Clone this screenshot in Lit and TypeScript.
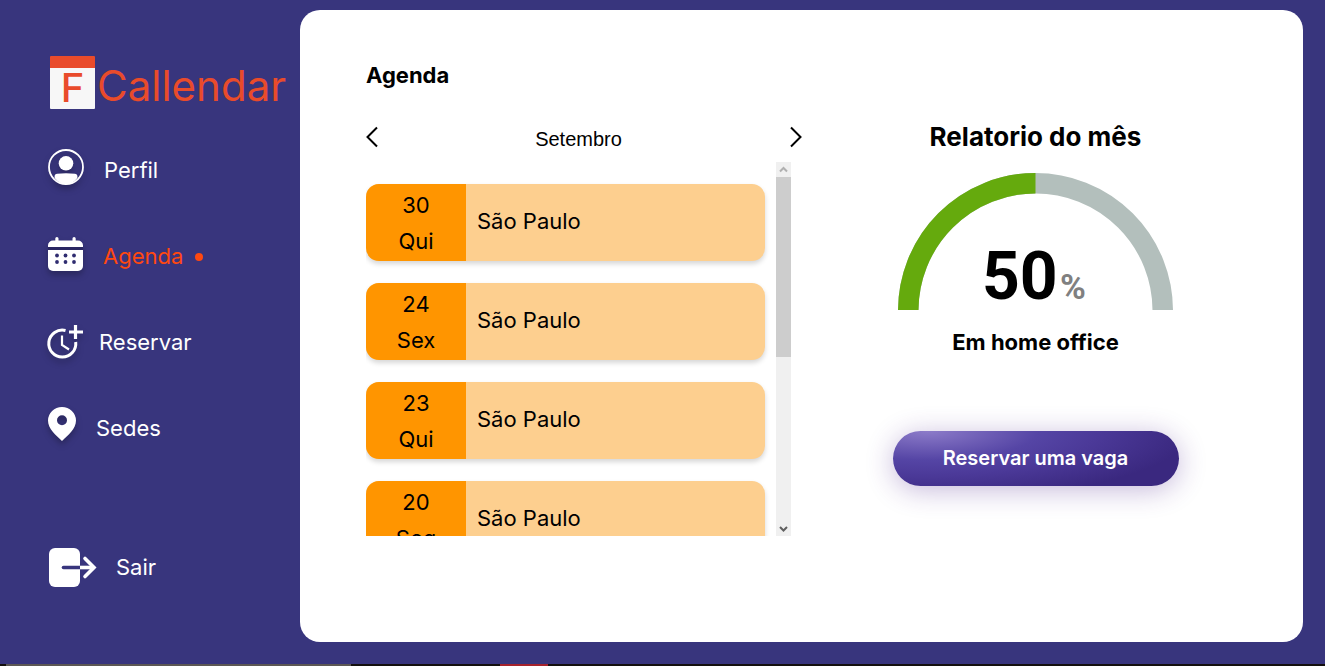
import { LitElement, html, css, svg } from "lit";
import { customElement, state, query } from "lit/decorators.js";
import { classMap } from "lit/directives/class-map.js";

const ICONS: Record<string, unknown> = {
  perfil: html`<svg class="icon shadow" width="36" height="38" viewBox="0 0 36 38" aria-hidden="true">
    <circle cx="18" cy="18" r="17" fill="none" stroke="#fff" stroke-width="1.8" />
    <circle cx="18" cy="14.3" r="7.3" fill="#fff" />
    <path d="M6.6 27.2c0-1.6 1-2.2 2.6-2.4 5.6-.7 12-.7 17.6 0 1.6.2 2.6.8 2.6 2.4v1.800A17 17 0 0 1 18 35.500 17 17 0 0 1 6.600 29z" fill="#fff" />
  </svg>`,
  agenda: html`<svg class="icon shadow" width="35" height="34" viewBox="0 0 35 34" aria-hidden="true">
    <path d="M0 10V8.500A5 5 0 0 1 5 3.500H7.300V1.500a1.600 1.600 0 0 1 3.200 0v2h14V1.500a1.600 1.600 0 0 1 3.200 0v2H30a5 5 0 0 1 5 5V10z" fill="#fff" />
    <path d="M0 10h35v3H0z" fill="#2a2763" />
    <path d="M0 13h35v16a5 5 0 0 1-5 5H5a5 5 0 0 1-5-5z" fill="#fff" />
    <g fill="#2f2c70">
      <circle cx="9" cy="18.500" r="1.900" /><circle cx="17.500" cy="18.500" r="1.900" /><circle cx="26" cy="18.500" r="1.900" />
      <circle cx="9" cy="25" r="1.900" /><circle cx="17.500" cy="25" r="1.900" /><circle cx="26" cy="25" r="1.900" />
    </g>
  </svg>`,
  reservar: html`<svg class="icon shadow" width="31" height="38" viewBox="1 -4 31 38" aria-hidden="true">
    <g fill="none" stroke="#fff">
      <path d="M18.500 5.500A13.500 13.500 0 1 0 28.700 17" stroke-width="3" />
      <path d="M15 10.500v9.500l7 4.500" stroke-width="2.200" />
      <path d="M28.500 0v14M22 7h14" stroke-width="3.200" />
    </g>
  </svg>`,
  sedes: html`<svg class="icon shadow" width="28" height="38" viewBox="0 0 28 38" aria-hidden="true">
    <path fill-rule="evenodd" d="M14 0A14 13.600 0 0 1 28 13.600C28 22 20 28.500 14 34 8 28.500 0 22 0 13.600A14 13.600 0 0 1 14 0zm0 8.300a5 5 0 1 0 0 10 5 5 0 0 0 0-10z" fill="#fff" />
  </svg>`,
  sair: html`<svg class="icon" width="48" height="39" viewBox="-1 0 48 39" aria-hidden="true">
    <rect width="31" height="39" rx="6" fill="#fff" />
    <path d="M14.500 19.500H31" stroke="#38357d" stroke-width="3.600" stroke-linecap="round" />
    <path d="M31 19.500h14" stroke="#fff" stroke-width="3.600" />
    <path d="M36 10.500l9 9-9 9" fill="none" stroke="#fff" stroke-width="3.600" stroke-linecap="round" />
  </svg>`,
};

const LINKS = [
  { id: "perfil", label: "Perfil" },
  { id: "agenda", label: "Agenda" },
  { id: "reservar", label: "Reservar" },
  { id: "sedes", label: "Sedes" },
];

const BOOKINGS = [
  { day: 30, week: "Qui", place: "São Paulo" },
  { day: 24, week: "Sex", place: "São Paulo" },
  { day: 23, week: "Qui", place: "São Paulo" },
  { day: 20, week: "Seg", place: "São Paulo" },
  { day: 16, week: "Qui", place: "São Paulo" },
  { day: 10, week: "Sex", place: "São Paulo" },
  { day: 9, week: "Qui", place: "São Paulo" },
];

const MONTHS = ["Janeiro", "Fevereiro", "Março", "Abril", "Maio", "Junho", "Julho", "Agosto", "Setembro", "Outubro", "Novembro", "Dezembro"];

@customElement("side-menu")
class SideMenu extends LitElement {
  static styles = css`
    :host { display: flex; flex-direction: column; padding: 56px 0 0 48px; box-sizing: border-box; }
    .logo { display: flex; align-items: center; gap: 2px; height: 53px; padding-left: 2px; color: #e94b2b; font-size: 42px; line-height: 53px; text-decoration: none; }
    .mark { flex: none; box-sizing: border-box; width: 45px; height: 53px; border-top: 12px solid #e94b2b; border-radius: 1px; background: #f7f7f7; font-size: 40px; font-weight: 500; line-height: 40px; text-align: center; }
    .word { padding-top: 6px; }
    .links { display: flex; flex-direction: column; padding-top: 16px; }
    .link { display: flex; align-items: center; gap: 20px; height: 86px; color: #fff; font-size: 22px; line-height: 32px; text-decoration: none; }
    .label { padding-top: 4px; }
    .current { color: #ff4810; }
    .current::after { content: ""; width: 8px; height: 8px; margin: 6px 0 0 -8px; border-radius: 50%; background: #ff4810; }
    .exit { margin-top: 55px; }
    .icon { flex: none; display: block; overflow: visible; }
    .shadow { filter: drop-shadow(0 4px 3px rgba(0, 0, 0, 0.25)); }
  `;
  render() {
    return html`
      <a class="logo" href="#inicio"><span class="mark">F</span><span class="word">Callendar</span></a>
      <nav class="links">
        ${LINKS.map((l) => html`<a class=${classMap({ link: true, current: l.id === "agenda" })} href="#${l.id}">${ICONS[l.id]}<span class="label">${l.label}</span></a>`)}
        <a class="link exit" href="#sair">${ICONS.sair}<span>Sair</span></a>
      </nav>
    `;
  }
}

@customElement("booking-list")
class BookingList extends LitElement {
  @state() private top = 0;
  @state() private thumb = 52.33;
  @query(".list") private list!: HTMLElement;

  static styles = css`
    :host { display: flex; min-height: 0; }
    .list { flex: 1; min-width: 0; margin: 0; padding: 22px 11px 0 0; list-style: none; overflow-y: auto; scrollbar-width: none; }
    .card { display: flex; height: 77px; margin-bottom: 22px; border-radius: 13px; background: #fdcf8f; box-shadow: 0 3px 5px rgba(0, 0, 0, 0.16); overflow: hidden; font-size: 22px; }
    .date { flex: none; width: 100px; padding-top: 3px; background: #ff9500; text-align: center; line-height: 36px; }
    .date span { display: block; }
    .place { padding-left: 11px; line-height: 75px; }
    .bar { flex: none; display: flex; flex-direction: column; width: 15px; background: #f0f0f0; }
    .step { height: 15px; padding: 0; border: 0; background: none; color: #606060; }
    .step:disabled { color: #b0b0b0; }
    .step svg { display: block; }
    .track { flex: 1; }
    .thumb { background: #cdcdcd; }
  `;
  private sync() {
    const { scrollTop, scrollHeight, clientHeight } = this.list;
    this.top = (scrollTop / scrollHeight) * 100;
    this.thumb = (clientHeight / scrollHeight) * 100;
  }
  private step(by: number) {
    this.list.scrollBy({ top: by });
  }
  render() {
    const arrow = (d: string) => html`<svg width="15" height="15" viewBox="0 0 15 15" aria-hidden="true"><path d=${d} fill="none" stroke="currentColor" stroke-width="2" /></svg>`;
    return html`
      <ul class="list" @scroll=${this.sync}>
        ${BOOKINGS.map((b) => html`<li class="card"><div class="date"><span>${b.day}</span><span>${b.week}</span></div><div class="place">${b.place}</div></li>`)}
      </ul>
      <div class="bar">
        <button class="step" aria-label="Subir" ?disabled=${this.top === 0} @click=${() => this.step(-99)}>${arrow("M4 9.500l3.500-3.500 3.500 3.500")}</button>
        <div class="track"><div class="thumb" style="height:${this.thumb}%;translate:0 ${(this.top / this.thumb) * 100}%"></div></div>
        <button class="step" aria-label="Descer" @click=${() => this.step(99)}>${arrow("M4 6l3.500 3.500L11 6")}</button>
      </div>
    `;
  }
}

@customElement("month-report")
class MonthReport extends LitElement {
  @state() private percent = 50;

  static styles = css`
    :host { display: flex; flex-direction: column; align-items: center; font-weight: 700; }
    .title { margin: 0; font-size: 26px; line-height: 32px; font-weight: 700; }
    .gauge { display: block; width: 275px; margin-top: 20px; }
    .value { font: 700 66px Roboto, Arial, sans-serif; }
    .unit { font: 700 35px Roboto, Arial, sans-serif; fill: #808080; }
    .note { margin: 16px 0 0; font-size: 22px; line-height: 32px; }
    .reserve { width: 286px; height: 55px; margin-top: 73px; padding: 0 0 2px; border: 0; border-radius: 28px; color: #fff; font: inherit; font-size: 20px; font-weight: 600; cursor: pointer;
      background: radial-gradient(92% 125% at 12% 0, #8c7bc9 0%, #5545a5 42%, #4b3998 65%, #3a287f 100%);
      box-shadow: 0 4px 28px rgba(75, 35, 140, 0.32); }
  `;
  render() {
    const arc = "M10.250 137.500a127.250 127.250 0 0 1 254.500 0";
    return html`
      <h2 class="title">Relatorio do mês</h2>
      <svg class="gauge" viewBox="0 0 275 137" role="img" aria-label="${this.percent}%">
        <path d=${arc} fill="none" stroke="#b3bfbc" stroke-width="20.500" />
        <path d=${arc} fill="none" stroke="#65aa0d" stroke-width="20.500" pathLength="100" stroke-dasharray="${this.percent} 100" />
        ${svg`<text class="value" x="84" y="126">${this.percent}</text><text class="unit" x="162" y="126">%</text>`}
      </svg>
      <p class="note">Em home office</p>
      <button class="reserve">Reservar uma vaga</button>
    `;
  }
}

@customElement("app-root")
class AppRoot extends LitElement {
  @state() private month = 8;

  static styles = css`
    :host { display: flex; flex-direction: column; min-height: 100vh; background: #38357d; color: #000; font-family: Inter, "Open Sans", sans-serif; }
    .page { flex: 1; display: grid; grid-template-columns: 300px minmax(0, 1fr); }
    .panel { display: grid; grid-template-columns: 425px minmax(286px, 1fr); align-items: start; gap: 35px; margin: 10px 22px 22px 0; padding: 49px 58px 0 66px; border-radius: 20px; background: #fff; box-sizing: border-box; }
    .heading { margin: 0; font-size: 22px; line-height: 32px; font-weight: 700; }
    .months { display: flex; align-items: center; height: 32px; margin-top: 30px; font: 20px "Liberation Sans", Arial, sans-serif; }
    .month { flex: 1; padding: 5px 11px 0 0; text-align: center; }
    .turn { width: 13px; height: 22px; padding: 0; border: 0; background: none; color: inherit; }
    .turn svg { display: block; }
    .right { margin-right: -11px; }
    .bookings { height: 374px; margin-top: 9px; }
    .report { padding-top: 62px; }
    .taskbar { display: flex; height: 2px; background: #14100f; }
    .search { width: 345px; margin-left: 6px; background: #5c5754; }
    .alert { width: 48px; margin-left: 149px; background: #a5222c; }
  `;
  private turn(by: number) {
    this.month = (this.month + by + 12) % 12;
  }
  render() {
    return html`
      <div class="page">
        <side-menu></side-menu>
        <main class="panel">
          <section>
            <h1 class="heading">Agenda</h1>
            <div class="months">
              <button class="turn" aria-label="Mês anterior" @click=${() => this.turn(-1)}>
                <svg width="13" height="22" viewBox="0 0 13 22"><path d="M11 1.500L1.500 11l9.500 9.500" fill="none" stroke="currentColor" stroke-width="2" /></svg>
              </button>
              <span class="month">${MONTHS[this.month]}</span>
              <button class="turn right" aria-label="Próximo mês" @click=${() => this.turn(1)}>
                <svg width="13" height="22" viewBox="0 0 13 22"><path d="M2 1.500l9.500 9.500L2 20.500" fill="none" stroke="currentColor" stroke-width="2" /></svg>
              </button>
            </div>
            <booking-list class="bookings"></booking-list>
          </section>
          <month-report class="report"></month-report>
        </main>
      </div>
      <div class="taskbar"><div class="search"></div><div class="alert"></div></div>
    `;
  }
}
